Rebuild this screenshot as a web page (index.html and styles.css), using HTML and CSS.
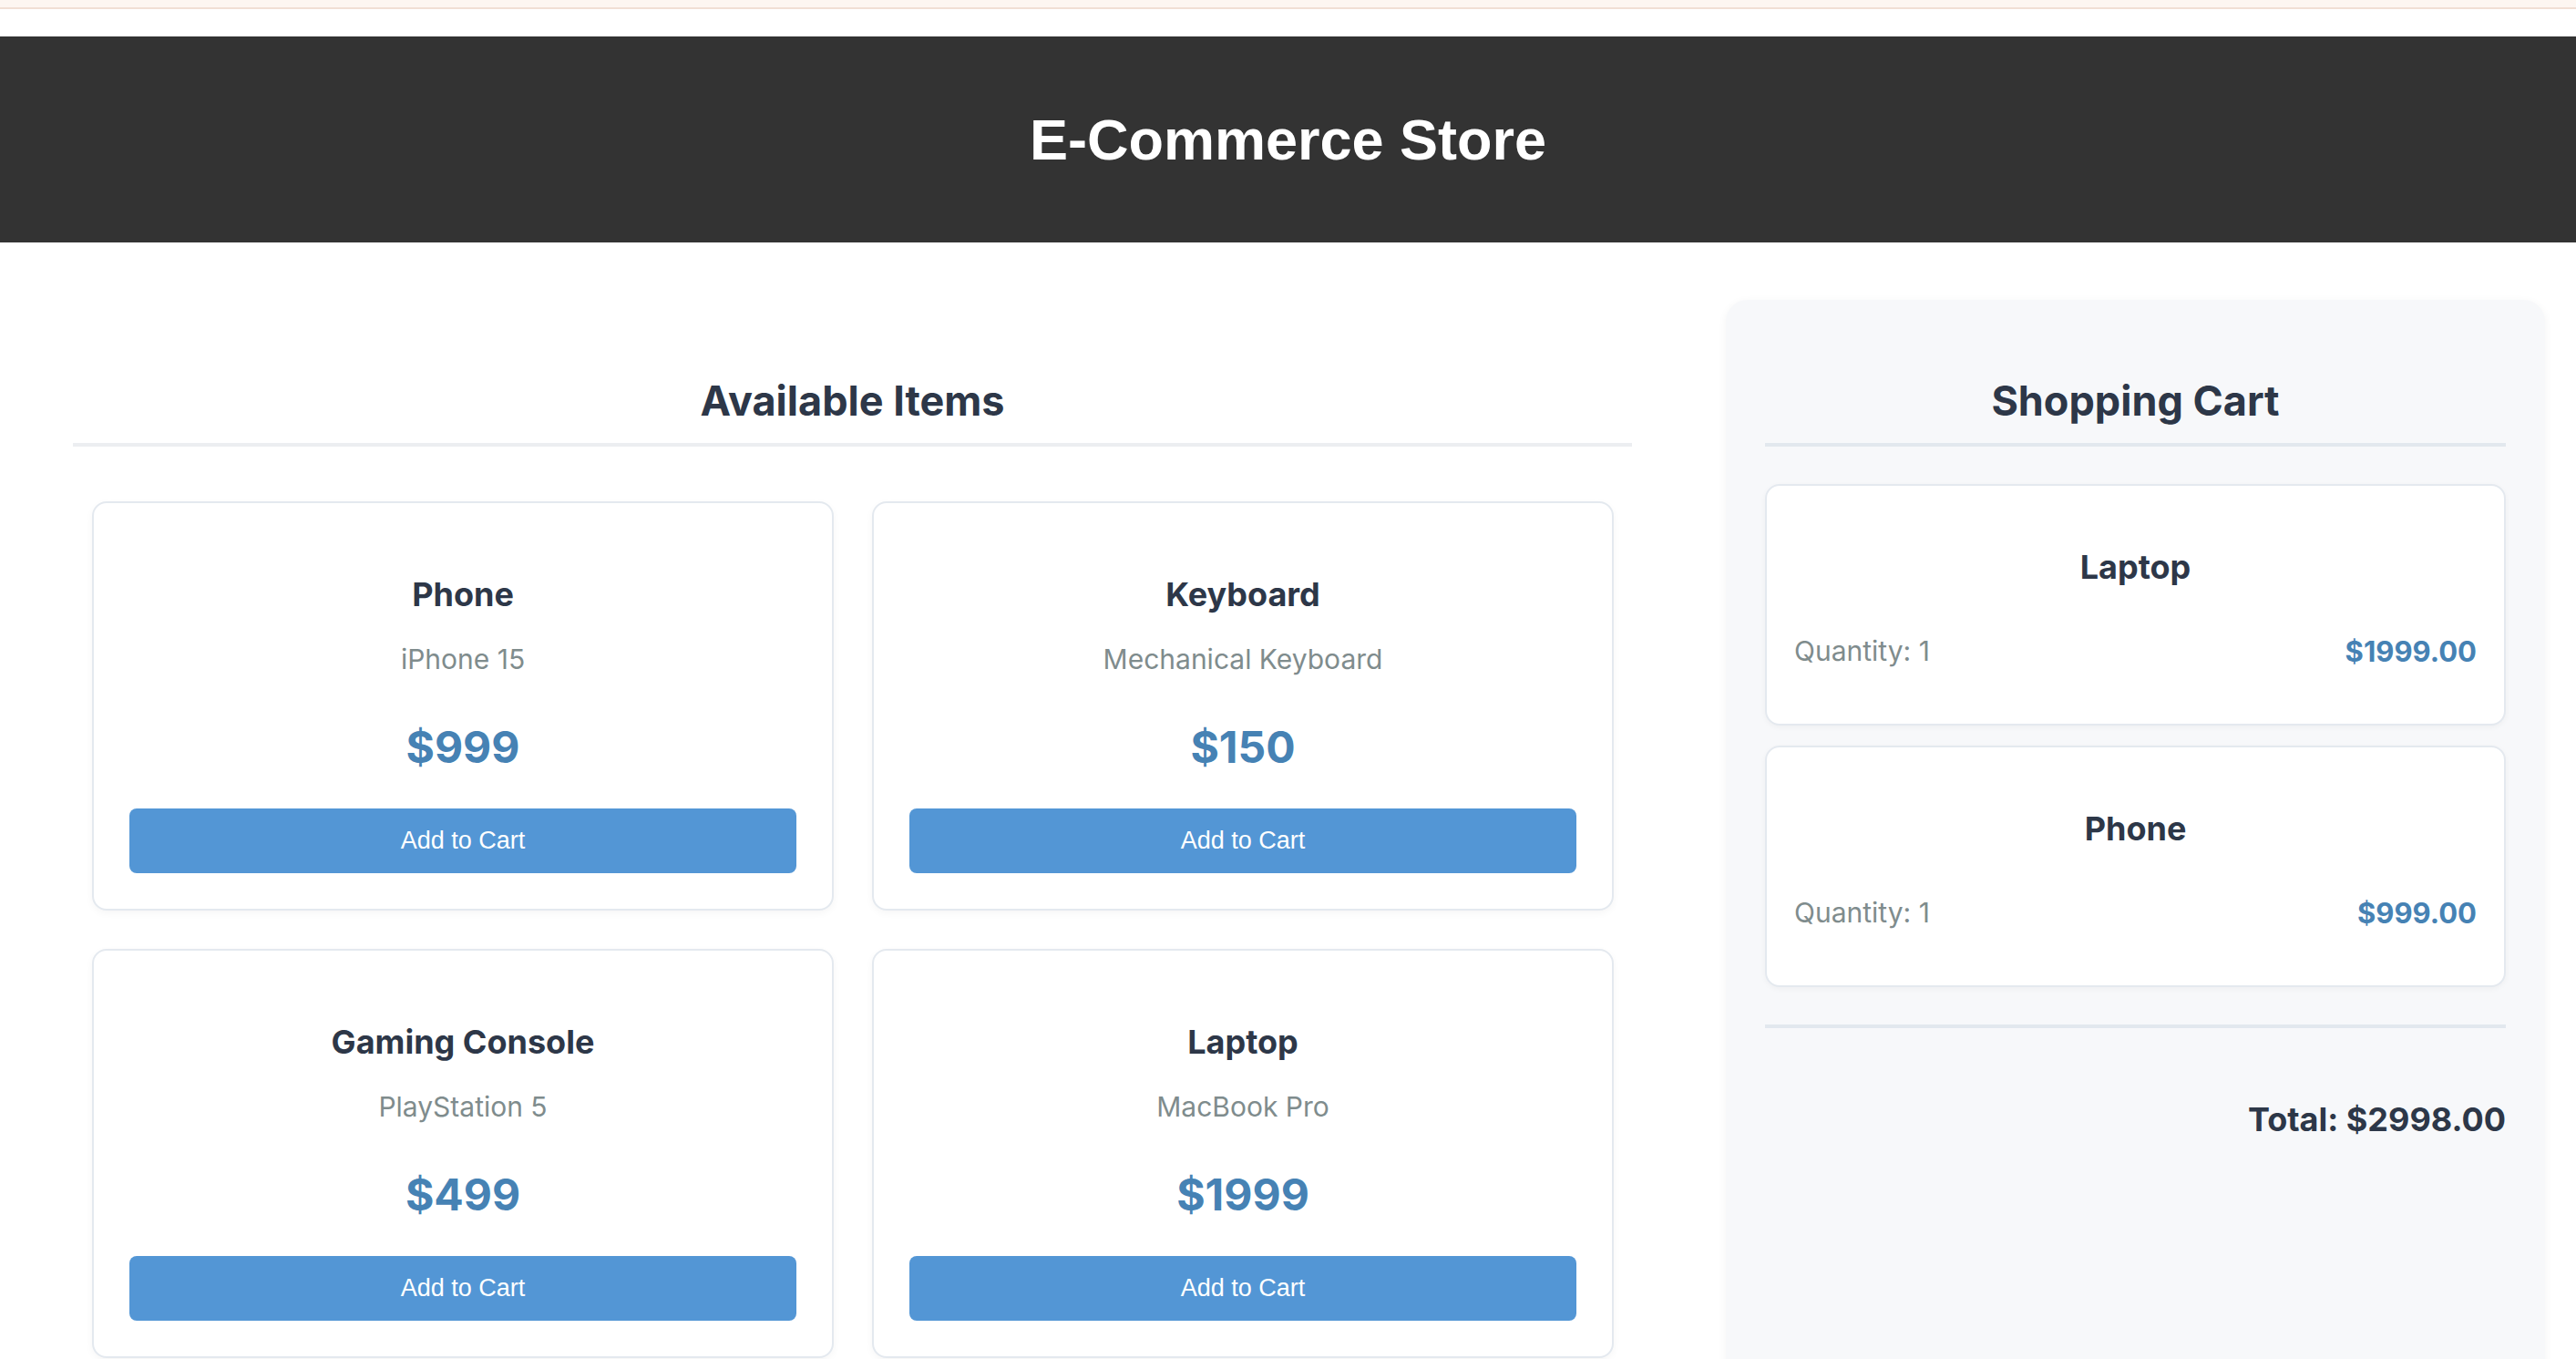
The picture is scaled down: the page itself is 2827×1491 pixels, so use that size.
FILE: index.html
```html
<!DOCTYPE html>
<html lang="en">
<head>
<meta charset="utf-8">
<title>E-Commerce Store</title>
<link rel="stylesheet" href="styles.css">
</head>
<body>
<div class="top-strip"></div>
<header class="site-header">
  <h1 class="site-title">E-Commerce Store</h1>
</header>
<main class="layout">
  <section class="items-section">
    <h2 class="section-title">Available Items</h2>
    <div class="items-grid">
      <div class="item-card">
        <h3 class="item-name">Phone</h3>
        <p class="item-desc">iPhone 15</p>
        <p class="item-price">$999</p>
        <button class="add-btn">Add to Cart</button>
      </div>
      <div class="item-card">
        <h3 class="item-name">Keyboard</h3>
        <p class="item-desc">Mechanical Keyboard</p>
        <p class="item-price">$150</p>
        <button class="add-btn">Add to Cart</button>
      </div>
      <div class="item-card">
        <h3 class="item-name">Gaming Console</h3>
        <p class="item-desc">PlayStation 5</p>
        <p class="item-price">$499</p>
        <button class="add-btn">Add to Cart</button>
      </div>
      <div class="item-card">
        <h3 class="item-name">Laptop</h3>
        <p class="item-desc">MacBook Pro</p>
        <p class="item-price">$1999</p>
        <button class="add-btn">Add to Cart</button>
      </div>
    </div>
  </section>
  <aside class="cart-panel">
    <h2 class="section-title cart-title">Shopping Cart</h2>
    <div class="cart-list">
      <div class="cart-item">
        <h3 class="cart-item-name">Laptop</h3>
        <div class="cart-row">
          <span class="cart-qty">Quantity: 1</span>
          <span class="cart-price">$1999.00</span>
        </div>
      </div>
      <div class="cart-item">
        <h3 class="cart-item-name">Phone</h3>
        <div class="cart-row">
          <span class="cart-qty">Quantity: 1</span>
          <span class="cart-price">$999.00</span>
        </div>
      </div>
    </div>
    <div class="cart-total">Total: $2998.00</div>
  </aside>
</main>
</body>
</html>
```
FILE: styles.css
```css
* { box-sizing: border-box; }

html, body {
  margin: 0;
  padding: 0;
  background: #ffffff;
  font-family: Inter, "Noto Sans", "DejaVu Sans", sans-serif;
  color: #2d3748;
  overflow: hidden;
}

.top-strip {
  height: 10px;
  background: #fdf6f1;
  border-bottom: 2px solid #f1dfd4;
}

.site-header {
  margin-top: 30px;
  height: 226px;
  background: #333333;
  display: flex;
  align-items: center;
  justify-content: center;
}

.site-title {
  margin: 0;
  font-family: "Liberation Sans", Arial, sans-serif;
  font-weight: 700;
  font-size: 63px;
  line-height: 1;
  color: #ffffff;
}

.layout {
  display: grid;
  grid-template-columns: 1797px 899px;
  column-gap: 60px;
  padding: 0 35px 0 37px;
  margin-top: 63px;
  align-items: start;
}

.items-section {
  padding: 43px;
}

.section-title {
  margin: 41px 0 0;
  font-size: 45px;
  line-height: 54px;
  font-weight: 700;
  text-align: center;
  color: #2d3748;
  padding-bottom: 19px;
  border-bottom: 4px solid #eceef1;
}

.items-grid {
  display: grid;
  grid-template-columns: 1fr 1fr;
  gap: 42px;
  padding: 0 20px 0 21px;
  margin-top: 60px;
}

.item-card {
  background: #ffffff;
  border: 2px solid #e4e9ef;
  border-radius: 16px;
  padding: 39px;
  text-align: center;
  box-shadow: 0 3px 8px rgba(0, 0, 0, 0.04);
}

.item-name {
  margin: 39px 0 0;
  font-size: 36px;
  line-height: 44px;
  font-weight: 700;
  color: #2d3748;
}

.item-desc {
  margin: 27px 0 0;
  font-size: 30px;
  line-height: 45px;
  color: #7f8c8d;
}

.item-price {
  margin: 45px 0 0;
  font-size: 48px;
  line-height: 58px;
  font-weight: 700;
  color: #4682b4;
}

.add-btn {
  display: block;
  width: 100%;
  height: 71px;
  margin-top: 38px;
  border: none;
  border-radius: 8px;
  background: #5396d5;
  color: #ffffff;
  font-family: "Liberation Sans", Arial, sans-serif;
  font-size: 27px;
  cursor: pointer;
}

.cart-panel {
  background: #f7f8fa;
  border-radius: 24px;
  padding: 43px;
  min-height: 1200px;
  box-shadow: 0 2px 10px rgba(0, 0, 0, 0.05);
}

.cart-title {
  border-bottom-color: #e2e8ee;
}

.cart-list {
  display: flex;
  flex-direction: column;
  gap: 22px;
  margin-top: 41px;
  padding-bottom: 41px;
  border-bottom: 4px solid #e2e8ee;
}

.cart-item {
  background: #ffffff;
  border: 2px solid #e4e9ef;
  border-radius: 16px;
  padding: 30px;
  box-shadow: 0 2px 6px rgba(0, 0, 0, 0.04);
}

.cart-item-name {
  margin: 37px 0 0;
  font-size: 36px;
  line-height: 44px;
  font-weight: 700;
  text-align: center;
  color: #2d3748;
}

.cart-row {
  display: flex;
  justify-content: space-between;
  align-items: center;
  margin: 48px 0 27px;
  line-height: 45px;
}

.cart-qty {
  font-size: 30px;
  color: #7f8c8d;
}

.cart-price {
  font-size: 31px;
  font-weight: 700;
  color: #4682b4;
}

.cart-total {
  margin-top: 79px;
  text-align: right;
  font-size: 36px;
  line-height: 43px;
  font-weight: 700;
  color: #2d3748;
}
```
